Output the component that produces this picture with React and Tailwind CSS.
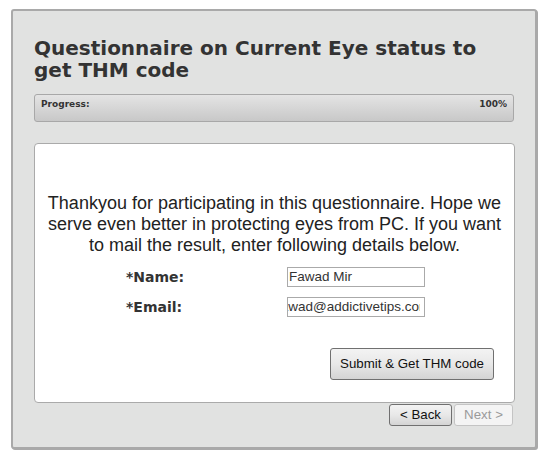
export default function App() {
  return (
    <div className="min-h-screen bg-white pl-[11px] pt-[9px]">
      <div className="w-[526px] h-[440px] bg-[#e1e2e1] border-2 border-[#a9a9a9] rounded-[3px] shadow-[1px_1px_0_#a9a9a9] px-[21px] pt-[26px]">
        <h1 className="font-['DejaVu_Sans',Verdana,sans-serif] font-bold text-[20px] leading-[22px] text-[#333]">
          Questionnaire on Current Eye status to get THM code
        </h1>

        <div className="mt-[13px] h-[28px] rounded-[3px] border border-[#a8a8a8] bg-gradient-to-b from-[#e4e4e4] to-[#c8c8c8] flex justify-between px-[6px] pt-[3px] font-['DejaVu_Sans',Verdana,sans-serif] font-bold text-[9px] text-[#333]">
          <span>Progress:</span>
          <span>100%</span>
        </div>

        <div className="mt-[21px] w-[481px] h-[260px] bg-white border border-[#aaa] rounded-[4px] pt-[49px] px-[10px] font-['Liberation_Sans',Arial,sans-serif]">
          <p className="text-center text-[18px] leading-[21px] text-[#222]">
            Thankyou for participating in this questionnaire. Hope we serve even better in protecting eyes from PC. If you want to mail the result, enter following details below.
          </p>

          <div className="mt-[11px] flex flex-col gap-[10px]">
            <div className="flex items-center h-[20px]">
              <label className="ml-[81px] w-[161px] font-['DejaVu_Sans',Verdana,sans-serif] font-bold text-[14px] text-[#333]">*Name:</label>
              <div className="w-[138px] h-[20px] border border-[#aaa] bg-white text-[13.5px] leading-[18px] text-[#333] px-[1px] overflow-hidden whitespace-nowrap">
                Fawad Mir
              </div>
            </div>
            <div className="flex items-center h-[20px]">
              <label className="ml-[81px] w-[161px] font-['DejaVu_Sans',Verdana,sans-serif] font-bold text-[14px] text-[#333]">*Email:</label>
              <div className="w-[138px] h-[20px] border border-[#aaa] bg-white pr-[4px] text-[13.5px] leading-[18px] text-[#333]">
                <div className="overflow-hidden whitespace-nowrap">
                  <span className="inline-block ml-[-11px]">fawad@addictivetips.com</span>
                </div>
              </div>
            </div>
          </div>

          <div className="flex justify-end mt-[31px] pr-[10px]">
            <button className="w-[164px] h-[32px] rounded-[3px] border border-[#707070] bg-gradient-to-b from-[#f3f3f3] via-[#e8e8e8] to-[#d4d4d4] text-[13.3px] text-[#111]">
              Submit &amp; Get THM code
            </button>
          </div>
        </div>

        <div className="flex justify-end gap-[2px] mt-[1px] pr-[1px] font-['Liberation_Sans',Arial,sans-serif] text-[13.3px]">
          <button className="w-[63px] h-[22px] rounded-[3px] border border-[#707070] bg-gradient-to-b from-[#f3f3f3] via-[#e8e8e8] to-[#d4d4d4] text-[#111]">
            &lt; Back
          </button>
          <button className="w-[59px] h-[22px] rounded-[3px] border border-[#c4c4c4] bg-[#f4f4f4] text-[#9a9a9a]">
            Next &gt;
          </button>
        </div>
      </div>
    </div>
  );
}
